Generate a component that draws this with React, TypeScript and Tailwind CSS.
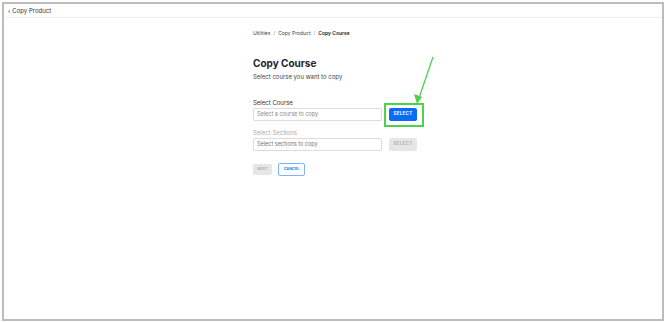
import React from 'react';

const font = { fontFamily: 'Inter, "Liberation Sans", sans-serif' };

export default function App() {
  return (
    <div className="w-[670px] h-[322px] bg-white pl-[2px] pt-[2px] pr-[6px] pb-[1px]" style={font}>
      <div className="relative h-full border-2 border-[#bcbcbc] bg-white flex flex-col">
        {/* top bar */}
        <div className="h-[14px] border-b border-[#efefef] flex items-center pl-[4px] text-[6px] text-[#333]">
          <span className="mr-[2px] text-[6px] leading-none">‹</span>
          <span>Copy Product</span>
        </div>

        <div className="flex justify-center pl-[10px]">
          <div className="w-[170px] pt-[12px] flex flex-col">
            <div className="text-[5px] text-[#444] flex gap-[3px]">
              <span>Utilities</span>
              <span className="text-[#888]">/</span>
              <span>Copy Product</span>
              <span className="text-[#888]">/</span>
              <span className="font-semibold text-[#222]">Copy Course</span>
            </div>

            <div className="mt-[20px] text-[10px] font-bold text-[#1e2330] leading-none">Copy Course</div>
            <div className="mt-[4px] text-[6px] text-[#444]">Select course you want to copy</div>

            <div className="mt-[17px] text-[6px] text-[#333]">Select Course</div>
            <div className="mt-[1px] flex items-center gap-[7px]">
              <div className="w-[129px] h-[13px] border border-[#dcdcdc] rounded-[2px] flex items-center px-[3px] text-[5.5px] text-[#888]">
                Select a course to copy
              </div>
              <div className="w-[28px] h-[13px] rounded-[2px] bg-[#0a6cf5] text-white text-[4.5px] font-bold tracking-[0.3px] flex items-center justify-center">
                SELECT
              </div>
            </div>

            <div className="mt-[7px] text-[6px] text-[#aaa]">Select Sections</div>
            <div className="mt-[1px] flex items-center gap-[7px]">
              <div className="w-[129px] h-[13px] border border-[#dcdcdc] rounded-[2px] flex items-center px-[3px] text-[5.5px] text-[#777]">
                Select sections to copy
              </div>
              <div className="w-[28px] h-[13px] rounded-[2px] bg-[#e6e6e6] text-[#b0b0b0] text-[4.5px] font-bold tracking-[0.3px] flex items-center justify-center">
                SELECT
              </div>
            </div>

            <div className="mt-[12px] flex items-center gap-[6px]">
              <div className="w-[19px] h-[11px] rounded-[2px] bg-[#e6e6e6] text-[#b0b0b0] text-[3.8px] font-bold flex items-center justify-center">
                NEXT
              </div>
              <div className="w-[27px] h-[13px] rounded-[2px] border border-[#7fb2f7] text-[#2a7bf0] text-[3.8px] font-bold flex items-center justify-center">
                CANCEL
              </div>
            </div>
          </div>
        </div>

        {/* annotation */}
        <div className="absolute left-[380px] top-[99px] w-[40px] h-[24px] border-2 border-[#4ed24e]" />
        <svg className="absolute left-[405px] top-[50px]" width="30" height="52" viewBox="0 0 30 52">
          <line x1="24" y1="3" x2="10" y2="44" stroke="#4ed24e" strokeWidth="1.3" />
          <polygon points="5,40 13,43 8,50" fill="#4ed24e" />
        </svg>
      </div>
    </div>
  );
}
